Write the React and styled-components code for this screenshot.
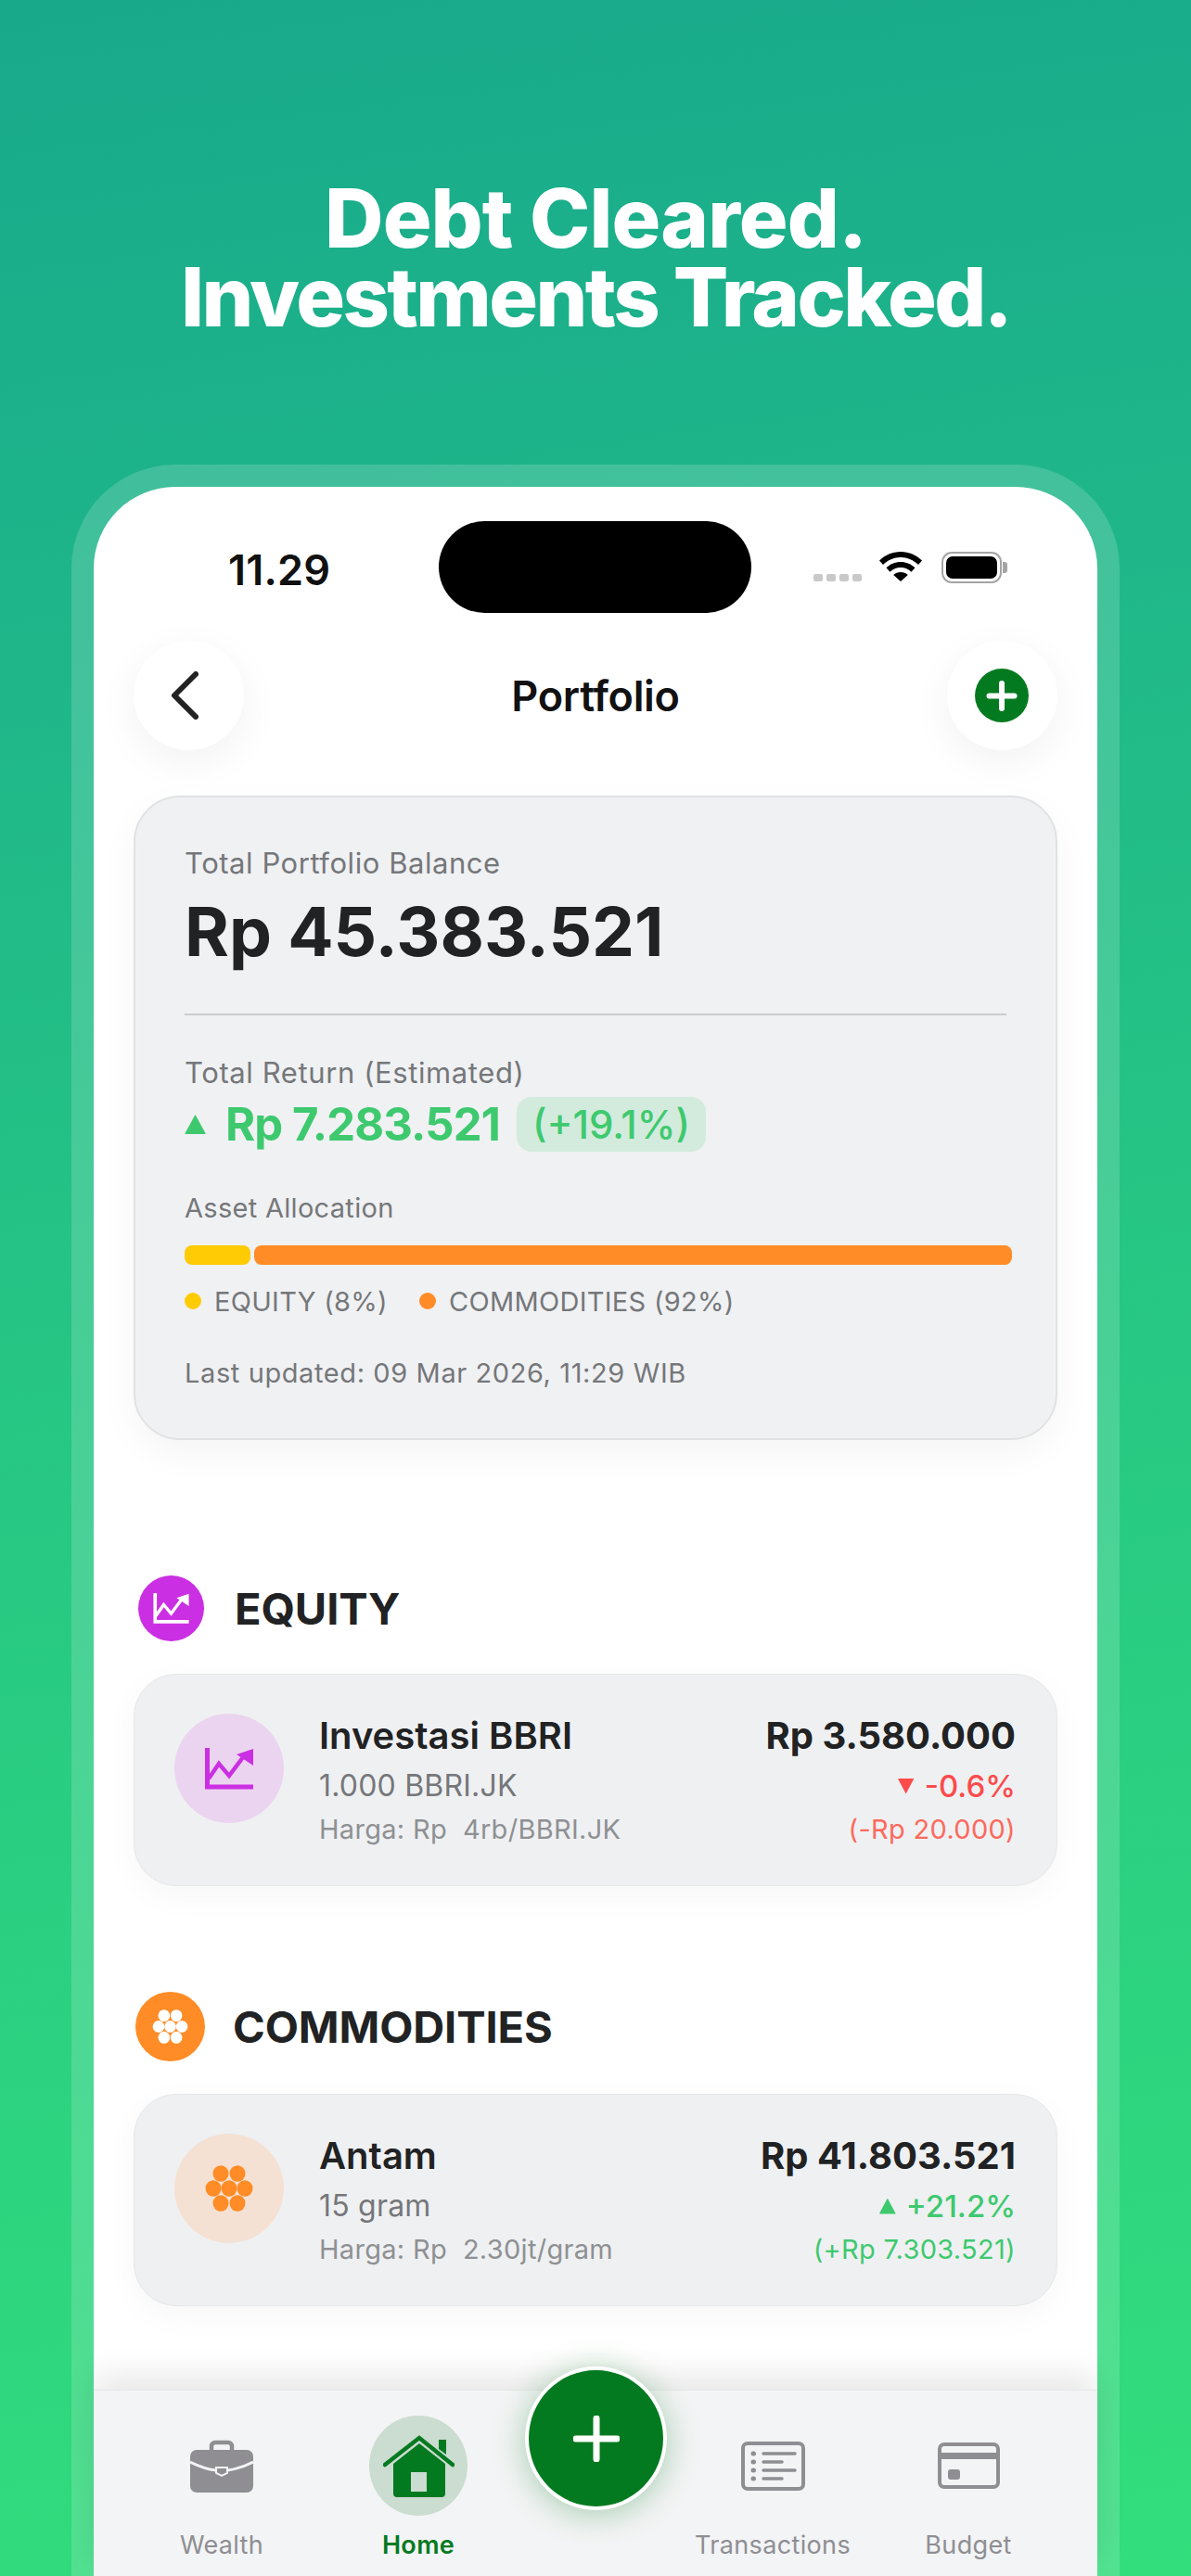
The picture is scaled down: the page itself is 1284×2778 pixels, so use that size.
import React from "react";
import styled, { createGlobalStyle } from "styled-components";

const Global = createGlobalStyle`
  html, body { margin: 0; padding: 0; }
  body { font-family: Inter, "Liberation Sans", sans-serif; color: #212223; }
  * { box-sizing: border-box; }
`;

const Stage = styled.div`
  width: 1284px; height: 2778px; overflow: hidden;
  display: flex; flex-direction: column; align-items: flex-start;
  background: linear-gradient(172deg, #18a98b 0%, #1eb58a 22%, #27c883 55%, #32de7c 100%);
`;
const Headline = styled.h1`
  margin: 0; padding-top: 193px; height: 501px; width: 100%;
  font-size: 88px; line-height: 85px; font-weight: 800;
  color: #fff; text-align: center;
`;
const HeadlineLine = styled.div`letter-spacing: ${p => p.$ls}px;`;
const Frame = styled.div`
  width: 1130px; margin-left: 77px; flex: 1; padding: 24px 24px 0;
  border-radius: 112px 112px 0 0;
  background: rgba(255,255,255,.16);
  display: flex;
`;
const Screen = styled.div`
  flex: 1; position: relative;
  background: #fff; border-radius: 88px 88px 0 0;
  display: flex; flex-direction: column;
`;
const StatusBar = styled.div`
  height: 136px; padding-top: 37px;
  display: grid; grid-template-columns: 372px 337px 1fr; align-items: start;
`;
const Time = styled.div`
  padding: 34px 0 0 145px; font-size: 45px; line-height: 38px; font-weight: 600; letter-spacing: .2px; color: #111;
`;
const Island = styled.div`height: 99px; border-radius: 50px; background: #000;`;
const StatusIcons = styled.div`
  padding: 33px 0 0 67px; display: flex; align-items: flex-start;
`;
const SignalDots = styled.div`
  display: flex; gap: 4px; margin: 24px 19px 0 0;
  span { width: 10px; height: 8px; border-radius: 2px; background: #c9c9c9; }
`;
const Battery = styled.div`
  width: 65px; height: 34px; margin: 0 0 0 21px; padding: 3px;
  border: 2px solid #a4a4a4; border-radius: 11px; position: relative;
  &::before { content: ""; display: block; height: 100%; background: #000; border-radius: 7px; }
  &::after { content: ""; position: absolute; right: -8px; top: 9px; width: 5px; height: 12px; background: #a4a4a4; border-radius: 0 3px 3px 0; }
`;
const Nav = styled.div`
  margin-top: 30px; padding: 0 43px; height: 118px;
  display: flex; align-items: center; justify-content: space-between;
`;
const RoundButton = styled.div`
  width: 119px; height: 118px; border-radius: 50%; background: #fff;
  display: flex; align-items: center; justify-content: center;
  box-shadow: 0 12px 44px rgba(0,0,0,.055);
`;
const BackGlyph = styled.span`display: flex; margin-right: 10px;`;
const NavTitle = styled.div`font-size: 45px; font-weight: 600; letter-spacing: -.3px; color: #111;`;
const Content = styled.div`padding: 49px 43px 0;`;
const Summary = styled.div`
  height: 695px; padding: 0 53px; border: 2px solid #e0e2e3; border-radius: 50px;
  background: #f0f1f3; box-shadow: 0 14px 40px rgba(0,0,0,.045);
`;
const Label = styled.div`
  margin-top: ${p => p.$mt}px; font-size: ${p => p.$fs || 29}px; line-height: ${p => p.$lh || 36}px;
  letter-spacing: ${p => p.$ls}px; color: #75777a;
`;
const Balance = styled.div`
  margin-top: 14px; font-size: 73px; line-height: 80px; font-weight: 700; letter-spacing: 0; color: #212223;
`;
const Divider = styled.div`margin-top: 48px; height: 2px; background: #cbcccd;`;
const ReturnRow = styled.div`
  margin-top: 8px; height: 59px; display: flex; align-items: center; color: #3ec96f;
`;
const TriangleMark = styled.span`
  flex: none; width: ${p => p.$w}px; height: ${p => p.$h}px; margin-right: ${p => p.$gap}px;
  background: currentColor; border-radius: 1px;
  clip-path: polygon(${p => p.$down ? "0 0, 100% 0, 50% 100%" : "50% 0, 100% 100%, 0 100%"});
`;
const ReturnValue = styled.span`font-size: 49px; font-weight: 700; letter-spacing: -.85px;`;
const ReturnBadge = styled.span`
  margin-left: 18px; height: 59px; width: 204px; border-radius: 16px; background: #d3ebdd;
  display: flex; align-items: center; justify-content: center;
  font-size: 42px; font-weight: 500; letter-spacing: 0;
`;
const Bar = styled.div`margin: 22px -6px 0 0; height: 21px; display: flex; gap: 4px;`;
const Segment = styled.div`
  height: 100%; border-radius: 8px; background: ${p => p.$color};
  ${p => p.$grow ? "flex: 1;" : "width: 71px;"}
`;
const Legend = styled.div`margin-top: 21px; display: flex; height: 36px; align-items: center; gap: 34px;`;
const LegendItem = styled.div`
  display: flex; align-items: center; gap: 14px;
  font-size: 29px; letter-spacing: .3px; color: #75777a;
  &::before { content: ""; width: 18px; height: 18px; border-radius: 50%; background: ${p => p.$color}; }
`;
const SectionHeader = styled.div`
  margin: ${p => p.$mt}px 0 35px ${p => p.$ml}px; display: flex; align-items: center; gap: ${p => p.$gap}px;
`;
const SectionIcon = styled.div`
  width: ${p => p.$size}px; height: ${p => p.$size}px; border-radius: 50%; background: ${p => p.$color};
  display: flex; align-items: center; justify-content: center;
`;
const SectionTitle = styled.div`font-size: 47px; font-weight: 700; letter-spacing: -.1px; color: #212223;`;
const ItemCard = styled.div`
  height: 229px; padding: 42px 44px 0 43px; display: flex; border: 1px solid #e6e7e9; border-radius: 46px;
  background: #eff0f2; box-shadow: 0 10px 36px rgba(0,0,0,.035);
`;
const ItemCircle = styled.div`
  flex: none; width: 118px; height: 118px; border-radius: 50%; background: ${p => p.$color}; margin-right: 38px;
  display: flex; align-items: center; justify-content: center;
`;
const ItemInfo = styled.div`flex: 1;`;
const ItemValues = styled.div`display: flex; flex-direction: column; align-items: flex-end;`;
const ItemName = styled.div`font-size: 40px; line-height: 48px; font-weight: 600; color: #212223;`;
const ItemAmount = styled(ItemName)`font-weight: 700;`;
const ItemSub = styled.div`margin-top: 10px; font-size: 32px; line-height: 40px; letter-spacing: .2px; color: #75777a;`;
const ItemChange = styled.div`
  margin-top: 10px; font-size: 33px; line-height: 40px; font-weight: 500; color: ${p => p.$color};
  display: flex; align-items: center;
`;
const ItemPrice = styled.div`
  margin-top: 9px; font-size: 29px; line-height: 36px; letter-spacing: .3px; white-space: pre; color: ${p => p.$color};
`;
const TabBar = styled.div`
  position: absolute; left: 0; right: 0; bottom: 0; height: 201px; padding: 27px 38px 0 36px;
  display: grid; grid-template-columns: 204px 220px 162px 220px 202px;
  background: #f3f4f5; border-top: 1px solid #e5e6e7;
  box-shadow: 0 -16px 32px rgba(0,0,0,.09);
`;
const Tab = styled.div`display: flex; flex-direction: column; align-items: center;`;
const TabSlot = styled.div`
  width: 106px; height: 108px; border-radius: 50%; background: ${p => p.$active ? "#cbdcd0" : "transparent"};
  display: flex; align-items: center; justify-content: center;
`;
const TabLabel = styled.div`
  margin-top: 14px; font-size: 27px; line-height: 36px; letter-spacing: .35px;
  font-weight: ${p => p.$active ? 600 : 400}; color: ${p => p.$active ? "#047a20" : "#8e8e93"};
`;
const Fab = styled.div`
  position: absolute; left: 465px; top: -26px; width: 153px; height: 155px; border-radius: 50%;
  background: #047a20; border: 4px solid #fff;
  display: flex; align-items: center; justify-content: center;
  box-shadow: 0 4px 34px rgba(4,122,32,.32);
`;

const Wifi = () => (
  <svg width="46" height="32" viewBox="0 0 46 32" fill="#000">
    <path d="M23 0C14 0 6 3.600 0 9.500l4 4.500C9 9 15.700 6 23 6s14 3 19 8l4-4.500C40 3.600 32 0 23 0z"/>
    <path d="M23 11c-6 0-11.500 2.400-15.500 6.300l4 4.400C14.500 18.800 18.500 17 23 17s8.500 1.800 11.500 4.700l4-4.400C34.500 13.400 29 11 23 11z"/>
    <path d="M23 22c-3 0-5.800 1.200-7.800 3.100L23 32l7.800-6.900C28.800 23.200 26 22 23 22z"/>
  </svg>
);
const Chevron = () => (
  <svg width="30" height="52" viewBox="0 0 30 52" fill="none" stroke="#222" strokeWidth="6" strokeLinecap="round" strokeLinejoin="round">
    <path d="M27 3 4 26l23 23"/>
  </svg>
);
const PlusBadge = () => (
  <svg width="58" height="58" viewBox="0 0 58 58">
    <circle cx="29" cy="29" r="29" fill="#047a20"/>
    <path d="M29 16v27M15.500 29.500h27" stroke="#fff" strokeWidth="6" strokeLinecap="round"/>
  </svg>
);
const Plus = () => (
  <svg width="50" height="50" viewBox="0 0 50 50">
    <path d="M25 3v44M3 25h44" stroke="#fff" strokeWidth="7" strokeLinecap="round"/>
  </svg>
);
const ChartUp = ({ color, w, h }) => (
  <svg width={w} height={h} viewBox="0 0 52 45" fill="none">
    <path d="M2.500 0v42H52" stroke={color} strokeWidth="5"/>
    <path d="M4 33 15 17l11 13 15-20" stroke={color} strokeWidth="4.500"/>
    <path d="M34 7 52 1v18z" fill={color}/>
  </svg>
);
const Honeycomb = ({ color, w, h }) => (
  <svg width={w} height={h} viewBox="0 0 52 50" fill={color}>
    {[[17,9],[35,9],[9,25],[26,25],[43,25],[17,41],[35,41]].map(([x, y]) => (
      <ellipse key={x + "-" + y} cx={x} cy={y} rx="8.500" ry="8.800"/>
    ))}
  </svg>
);
const Briefcase = () => (
  <svg width="68" height="57" viewBox="0 0 68 57">
    <path d="M23 13V7a4 4 0 0 1 4-4h14a4 4 0 0 1 4 4v6" fill="none" stroke="#8e8e93" strokeWidth="4.500"/>
    <rect x="0" y="11" width="68" height="46" rx="7" fill="#8e8e93"/>
    <path d="M0 24c10 5 20 8 28 9M40 33c8-1 18-4 28-9" fill="none" stroke="#f3f4f5" strokeWidth="3"/>
    <path d="M28 30h12v6l-6 3-6-3z" fill="#8e8e93" stroke="#f3f4f5" strokeWidth="2"/>
  </svg>
);
const House = () => (
  <svg width="77" height="67" viewBox="0 0 77 67">
    <path d="M60 5h8v16l-8-6z" fill="#047a20"/>
    <path d="M2 32 39 3l36 29" fill="none" stroke="#047a20" strokeWidth="4.500" strokeLinecap="round"/>
    <path d="M39 9 67 31v32a4 4 0 0 1-4 4H15a4 4 0 0 1-4-4V31z" fill="#047a20"/>
    <rect x="30" y="40" width="17" height="21" fill="#cbdcd0"/>
  </svg>
);
const ListIcon = () => (
  <svg width="69" height="53" viewBox="0 0 69 53" fill="none" stroke="#8e8e93">
    <rect x="2" y="2" width="65" height="49" rx="5" strokeWidth="4"/>
    <g strokeWidth="3.500" strokeLinecap="round">
      <path d="M24 13h34M24 22h20M24 31h34M24 40h20"/>
      <path d="M13 13h.5M13 22h.5M13 31h.5M13 40h.5" strokeWidth="5"/>
    </g>
  </svg>
);
const CardIcon = () => (
  <svg width="67" height="50" viewBox="0 0 67 50">
    <rect x="2" y="2" width="63" height="46" rx="5" fill="none" stroke="#8e8e93" strokeWidth="4"/>
    <rect x="2" y="11" width="63" height="7" fill="#8e8e93"/>
    <rect x="11" y="29" width="13" height="11" rx="3" fill="#8e8e93"/>
  </svg>
);

const green = "#3ec96f";
const red = "#fc4b4b";

const sections = [
  {
    title: "EQUITY", mt: 146, ml: 5, gap: 33, size: 71, color: "#cb2fe3", Icon: ChartUp, iconW: 39, iconH: 33,
    tint: "#ebd4ef", itemW: 52, itemH: 45,
    name: "Investasi BBRI", sub: "1.000 BBRI.JK", price: "Harga: Rp  4rb/BBRI.JK",
    amount: "Rp 3.580.000", change: "-0.6%", gain: "(-Rp 20.000)", down: true, tone: red, gainTone: "#fb6a5c",
  },
  {
    title: "COMMODITIES", mt: 114, ml: 2, gap: 30, size: 75, color: "#ff8c26", Icon: Honeycomb, iconW: 39, iconH: 37,
    tint: "#f4e1d3", itemW: 52, itemH: 50,
    name: "Antam", sub: "15 gram", price: "Harga: Rp  2.30jt/gram",
    amount: "Rp 41.803.521", change: "+21.2%", gain: "(+Rp 7.303.521)", down: false, tone: green, gainTone: green,
  },
];

const tabs = [
  { label: "Wealth", icon: <Briefcase /> },
  { label: "Home", icon: <House />, active: true },
  { label: "" },
  { label: "Transactions", icon: <ListIcon /> },
  { label: "Budget", icon: <CardIcon /> },
];

export default function App() {
  return (
    <Stage>
      <Global />
      <Headline>
        <HeadlineLine $ls={-0.9}>Debt Cleared.</HeadlineLine>
        <HeadlineLine $ls={-2.6}>Investments Tracked.</HeadlineLine>
      </Headline>
      <Frame>
        <Screen>
          <StatusBar>
            <Time>11.29</Time>
            <Island />
            <StatusIcons>
              <SignalDots><span /><span /><span /><span /></SignalDots>
              <Wifi />
              <Battery />
            </StatusIcons>
          </StatusBar>
          <Nav>
            <RoundButton><BackGlyph><Chevron /></BackGlyph></RoundButton>
            <NavTitle>Portfolio</NavTitle>
            <RoundButton><PlusBadge /></RoundButton>
          </Nav>
          <Content>
            <Summary>
              <Label $mt={51} $fs={31} $lh={40} $ls={.55}>Total Portfolio Balance</Label>
              <Balance>Rp 45.383.521</Balance>
              <Divider />
              <Label $mt={44} $fs={31} $ls={.6}>Total Return (Estimated)</Label>
              <ReturnRow>
                <TriangleMark $w={23} $h={21} $gap={21} />
                <ReturnValue>Rp 7.283.521</ReturnValue>
                <ReturnBadge>(+19.1%)</ReturnBadge>
              </ReturnRow>
              <Label $mt={43} $ls={.3}>Asset Allocation</Label>
              <Bar>
                <Segment $color="#ffcb05" />
                <Segment $color="#ff8c26" $grow />
              </Bar>
              <Legend>
                <LegendItem $color="#ffcb05">EQUITY (8%)</LegendItem>
                <LegendItem $color="#ff8c26">COMMODITIES (92%)</LegendItem>
              </Legend>
              <Label $mt={42} $ls={.6}>Last updated: 09 Mar 2026, 11:29 WIB</Label>
            </Summary>
            {sections.map(s => (
              <React.Fragment key={s.title}>
                <SectionHeader $mt={s.mt} $ml={s.ml} $gap={s.gap}>
                  <SectionIcon $size={s.size} $color={s.color}>
                    <s.Icon color="#fff" w={s.iconW} h={s.iconH} />
                  </SectionIcon>
                  <SectionTitle>{s.title}</SectionTitle>
                </SectionHeader>
                <ItemCard>
                  <ItemCircle $color={s.tint}>
                    <s.Icon color={s.color} w={s.itemW} h={s.itemH} />
                  </ItemCircle>
                  <ItemInfo>
                    <ItemName>{s.name}</ItemName>
                    <ItemSub>{s.sub}</ItemSub>
                    <ItemPrice $color="#8e9093">{s.price}</ItemPrice>
                  </ItemInfo>
                  <ItemValues>
                    <ItemAmount>{s.amount}</ItemAmount>
                    <ItemChange $color={s.tone}>
                      <TriangleMark $w={18} $h={17} $gap={11} $down={s.down} />
                      {s.change}
                    </ItemChange>
                    <ItemPrice $color={s.gainTone}>{s.gain}</ItemPrice>
                  </ItemValues>
                </ItemCard>
              </React.Fragment>
            ))}
          </Content>
          <TabBar>
            {tabs.map((t, i) => (
              <Tab key={i}>
                {t.icon && <TabSlot $active={t.active}>{t.icon}</TabSlot>}
                {t.label && <TabLabel $active={t.active}>{t.label}</TabLabel>}
              </Tab>
            ))}
            <Fab><Plus /></Fab>
          </TabBar>
        </Screen>
      </Frame>
    </Stage>
  );
}
